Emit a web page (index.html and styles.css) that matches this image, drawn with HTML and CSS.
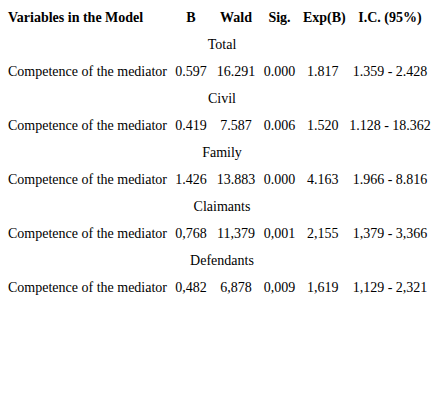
FILE: index.html
```html
<!DOCTYPE html>
<html>
<head>
  <title>Logistic Regression - Competence of the Mediator</title>
  <meta charset="UTF-8">
  <link rel="stylesheet" href="styles.css">
</head>
<body>
  <table class="model-table">
    <colgroup>
      <col class="col-var">
      <col class="col-b">
      <col class="col-wald">
      <col class="col-sig">
      <col class="col-exp">
      <col class="col-ic">
    </colgroup>
    <thead>
      <tr>
        <th class="var-name">Variables in the Model</th>
        <th>B</th>
        <th>Wald</th>
        <th>Sig.</th>
        <th class="exp">Exp(B)</th>
        <th class="ic">I.C. (95%)</th>
      </tr>
    </thead>
    <tbody>
      <tr class="group-row"><td colspan="6">Total</td></tr>
      <tr>
        <td class="var-name">Competence of the mediator</td>
        <td>0.597</td><td>16.291</td><td>0.000</td><td class="exp">1.817</td><td class="ic">1.359 - 2.428</td>
      </tr>
      <tr class="group-row"><td colspan="6">Civil</td></tr>
      <tr>
        <td class="var-name">Competence of the mediator</td>
        <td>0.419</td><td>7.587</td><td>0.006</td><td class="exp">1.520</td><td class="ic">1.128 - 18.362</td>
      </tr>
      <tr class="group-row"><td colspan="6">Family</td></tr>
      <tr>
        <td class="var-name">Competence of the mediator</td>
        <td>1.426</td><td>13.883</td><td>0.000</td><td class="exp">4.163</td><td class="ic">1.966 - 8.816</td>
      </tr>
      <tr class="group-row"><td colspan="6">Claimants</td></tr>
      <tr>
        <td class="var-name">Competence of the mediator</td>
        <td>0,768</td><td>11,379</td><td>0,001</td><td class="exp">2,155</td><td class="ic">1,379 - 3,366</td>
      </tr>
      <tr class="group-row"><td colspan="6">Defendants</td></tr>
      <tr>
        <td class="var-name">Competence of the mediator</td>
        <td>0,482</td><td>6,878</td><td>0,009</td><td class="exp">1,619</td><td class="ic">1,129 - 2,321</td>
      </tr>
    </tbody>
  </table>
</body>
</html>
```

FILE: styles.css
```css
body {
  margin: 0;
  padding: 4px 8px;
  background-color: #fff;
  font-family: "Liberation Serif", "Times New Roman", serif;
  font-size: 14px;
  color: #000;
}
.model-table {
  width: 428px;
  border-collapse: collapse;
  table-layout: fixed;
}
.col-var { width: 164px; }
.col-b { width: 38px; }
.col-wald { width: 52px; }
.col-sig { width: 35px; }
.col-exp { width: 41px; }
.col-ic { width: 98px; }
.model-table th,
.model-table td {
  height: 27px;
  padding: 0;
  text-align: center;
  white-space: nowrap;
  vertical-align: middle;
}
.model-table th {
  font-weight: bold;
}
.model-table .var-name {
  text-align: left;
}
.model-table .exp {
  padding-left: 10px;
}
.model-table th.exp {
  padding-left: 6px;
}
.model-table .ic {
  padding-left: 6px;
}
.group-row td {
  text-align: center;
}
```
